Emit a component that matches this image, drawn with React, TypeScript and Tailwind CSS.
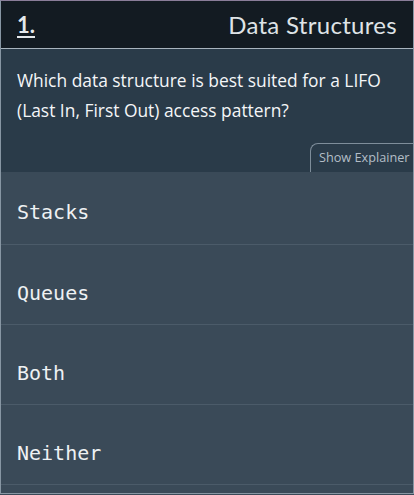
const answers = ["Stacks", "Queues", "Both", "Neither"];

export default function App() {
  return (
    <div className="w-[414px] h-[495px] bg-[#3a4a58] overflow-hidden">
      <div className="h-[494px] flex flex-col border-t border-t-[#8a7d99] border-x border-x-[#8796a3] border-b border-b-[#8796a3] font-['Lato',sans-serif]">
        {/* Header */}
        <div className="h-[48px] shrink-0 bg-[#131b22] border-b border-[#a8b4be] flex items-center justify-between pl-4 pr-4">
          <span className="text-[22px] font-bold text-[#e4e8eb] underline underline-offset-[3px] decoration-2">
            1.
          </span>
          <span className="text-[24px] text-[#dfe3e6] tracking-[0.3px]">Data Structures</span>
        </div>

        {/* Question */}
        <div className="h-[123px] shrink-0 bg-[#2a3b49] flex flex-col justify-between">
          <p className="pt-[16px] pl-4 pr-2 font-['Open_Sans',sans-serif] text-[17.4px] leading-[30px] text-[#f4f6f8]">
            Which data structure is best suited for a LIFO<br />
            (Last In, First Out) access pattern?
          </p>
          <div className="flex justify-end">
            <button className="h-[29px] w-[103px] border-l border-t border-[#7e8d9a] rounded-tl-[8px] font-['Open_Sans',sans-serif] text-[12.7px] text-[#b3bec7] pl-2 text-left">
              Show Explainer
            </button>
          </div>
        </div>

        {/* Answers */}
        <div className="flex flex-col bg-[#3a4a58]">
          {answers.map((a, i) => (
            <div
              key={a}
              className={`${i === 0 ? "h-[73px] pt-[27px]" : "h-[80px] pt-[35px]"} border-b border-[#4b5b69] pl-4 font-['DejaVu_Sans_Mono',monospace] text-[20px] leading-[26px] text-[#eef1f3]`}
            >
              {a}
            </div>
          ))}
        </div>
      </div>
    </div>
  );
}
